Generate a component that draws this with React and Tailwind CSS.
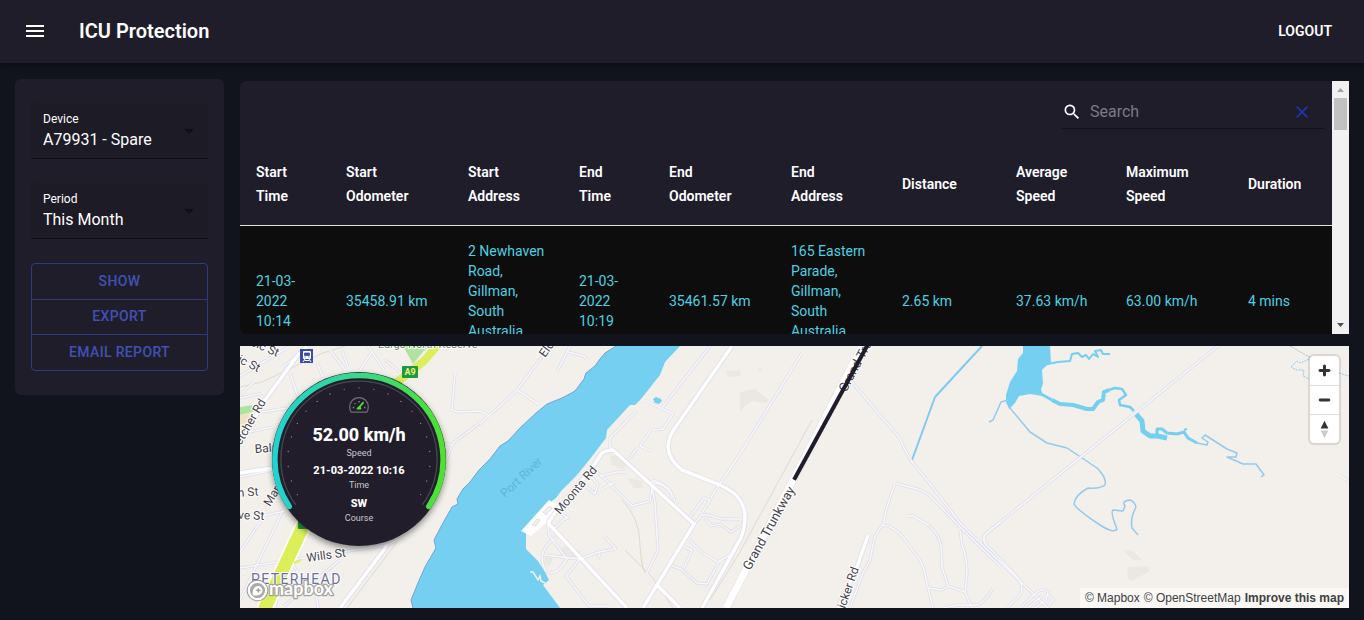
import React from 'react';
import { MdArrowDropDown, MdClear, MdMenu, MdSearch } from 'react-icons/md';

const columns = [
  { lines: ['Start', 'Time'], width: 'w-[90px]' },
  { lines: ['Start', 'Odometer'], width: 'w-[122px]' },
  { lines: ['Start', 'Address'], width: 'w-[111px]' },
  { lines: ['End', 'Time'], width: 'w-[90px]' },
  { lines: ['End', 'Odometer'], width: 'w-[122px]' },
  { lines: ['End', 'Address'], width: 'w-[111px]' },
  { lines: ['Distance'], width: 'w-[114px]' },
  { lines: ['Average', 'Speed'], width: 'w-[110px]' },
  { lines: ['Maximum', 'Speed'], width: 'w-[122px]' },
  { lines: ['Duration'], width: 'w-[100px]' },
];

const trips = [
  [
    ['21-03-', '2022', '10:14'],
    ['35458.91 km'],
    ['2 Newhaven', 'Road,', 'Gillman,', 'South', 'Australia'],
    ['21-03-', '2022', '10:19'],
    ['35461.57 km'],
    ['165 Eastern', 'Parade,', 'Gillman,', 'South', 'Australia'],
    ['2.65 km'],
    ['37.63 km/h'],
    ['63.00 km/h'],
    ['4 mins'],
  ],
];

function Lines({ items }) {
  return items.map((line) => (
    <span key={line} className="block whitespace-nowrap">
      {line}
    </span>
  ));
}

function Header() {
  return (
    <header className="relative z-10 flex h-[63px] items-center bg-[#201d2b] pr-6 pb-0.5 pl-[15px] shadow-[0_2px_5px_rgba(0,0,0,0.45)]">
      <button type="button" aria-label="Open menu" className="p-2 text-white">
        <MdMenu size={24} />
      </button>
      <h1 className="ml-6 text-xl font-semibold">ICU Protection</h1>
      <button type="button" className="ml-auto px-2 text-sm font-semibold">
        LOGOUT
      </button>
    </header>
  );
}

function SelectField({ id, label, value }) {
  return (
    <div className="relative rounded-t border-b border-[#0f0f15] bg-[#1d1b26] px-3 pt-2 pb-[5px]">
      <label htmlFor={id} className="block text-xs leading-4">
        {label}
      </label>
      <select
        id={id}
        defaultValue={value}
        className="block h-[26px] w-full appearance-none bg-transparent text-base text-white outline-none"
      >
        <option>{value}</option>
      </select>
      <MdArrowDropDown
        size={24}
        className="pointer-events-none absolute inset-y-0 right-[7px] my-auto text-[#100f16]"
      />
    </div>
  );
}

function Sidebar() {
  return (
    <aside className="flex w-[209px] shrink-0 flex-col gap-6 self-start rounded-md bg-[#201d2b] px-4 py-6">
      <SelectField id="device" label="Device" value="A79931 - Spare" />
      <SelectField id="period" label="Period" value="This Month" />
      <div className="flex flex-col divide-y divide-[#2f3a80] rounded border border-[#2f3a80] text-sm font-medium tracking-wide text-[#3f51b5]">
        <button type="button" className="h-9 pb-0.5">
          SHOW
        </button>
        <button type="button" className="h-[35px] pb-0.5">
          EXPORT
        </button>
        <button type="button" className="h-[35px] pb-0.5">
          EMAIL REPORT
        </button>
      </div>
    </aside>
  );
}

function ScrollTrack() {
  return (
    <div aria-hidden="true" className="flex w-[17px] shrink-0 flex-col items-center bg-[#f1f1f1]">
      <svg width="17" height="17" viewBox="0 0 17 17">
        <path d="M5 11h7L8.500 7z" fill="#a3a3a3" />
      </svg>
      <div className="h-8 w-[13px] bg-[#c1c1c1]" />
      <svg width="17" height="17" viewBox="0 0 17 17" className="mt-auto">
        <path d="M5 6h7L8.500 10z" fill="#505050" />
      </svg>
    </div>
  );
}

function TripTable() {
  return (
    <section className="flex h-[253px] overflow-hidden rounded-l-md bg-[#201d2b]">
      <div className="min-w-0 flex-1 overflow-hidden">
        <div className="flex h-[63px] items-center justify-end pr-2">
          <div className="flex h-8 w-[262px] items-center border-b border-[#12111a]">
            <MdSearch size={20} className="text-white" />
            <input
              type="text"
              aria-label="Search"
              placeholder="Search"
              className="ml-2 min-w-0 flex-1 bg-transparent text-base text-white outline-none placeholder:text-[#7c7a83]"
            />
            <button type="button" aria-label="Clear search" className="mr-3 text-[#2433b4]">
              <MdClear size={20} />
            </button>
          </div>
        </div>
        <table className="w-full table-fixed border-collapse text-sm">
          <thead>
            <tr className="border-b border-[#e0e0e0]">
              {columns.map((column) => (
                <th
                  key={column.lines.join(' ')}
                  scope="col"
                  className={`${column.width} px-4 pt-4 pb-[17px] text-left align-middle leading-6 font-semibold text-white`}
                >
                  <Lines items={column.lines} />
                </th>
              ))}
            </tr>
          </thead>
          <tbody>
            {trips.map((trip, row) => (
              <tr key={row} className="h-[151px] bg-[#0d0d0d]">
                {trip.map((cell, i) => (
                  <td
                    key={i}
                    className={
                      cell.length > 3
                        ? 'px-4 pt-[15px] align-top leading-5 text-[#4dd0e1]'
                        : 'p-4 align-middle leading-5 text-[#4dd0e1]'
                    }
                  >
                    <Lines items={cell} />
                  </td>
                ))}
              </tr>
            ))}
          </tbody>
        </table>
      </div>
      <ScrollTrack />
    </section>
  );
}

const mainRoads = [
  'M548 523L627 608',
  'M548 523L557 510L592 468L602 453Q606 450 613 450L694 524L643 608',
  'M657 585L680 608',
  'M732 346L677 425Q668 436 668 448Q669 460 682 470L720 485Q736 492 741 502Q749 515 741 538L702 608',
  'M868 535L857 567L838 608',
  'M307 346L298 355L265 400L242 440',
  'M387 545L383 551L340 608',
  'M240 473L273 468',
];

const minorRoads = [
  'M710 346L662 408',
  'M694 524L702 515L708 515L722 519L740 519',
  'M644 400L673 414L663 429L654 430M652 428L640 446L651 451M637 448L629 459',
  'M636 411L610 438L610 447L613 450',
  'M592 468L604 478L632 506L650 501L652 488L655 484M600 476L617 472L627 472M652 488L655 502L658 550L647 573',
  'M647 482Q668 482 675 501M652 480Q672 486 672 497',
  'M548 525L549 535L567 559Q556 578 546 571Q537 556 549 543L557 537M544 555L580 559L599 552L616 549L604 536M600 553L598 559',
  'M580 559L566 576L589 606L609 606',
  'M555 528L563 520L568 518L560 513',
  'M590 476L598 484L595 494L587 487M602 489L615 482',
  'M690 517L704 498L710 500L702 513M711 497L740 454L802 353',
  'M705 518L711 526L720 524L731 532L740 526M689 540L704 554L718 562L730 555L740 538M685 547L692 550L684 568M672 566L681 569L697 583L707 584L720 560',
  'M852 382L873 407L893 430Q901 438 903 446L912 462L927 480L960 523L1000 562L1048 608',
  'M895 483L917 489Q928 492 935 501L960 527L1000 566',
  'M895 483L886 510L883 525Q874 534 873 545L870 560L863 573L850 608',
  'M883 525Q893 526 903 537L913 551Q924 563 925 575L933 608',
  'M907 516L913 516L928 525Q940 535 941 546L942 567L948 586L965 592L971 606M928 588L942 590L948 586',
  'M960 530L962 545Q967 557 967 573L965 592M943 608L957 605L978 605Q985 602 993 588',
  'M985 544L984 536Q990 530 1000 522',
  'M1218 346L987 533Q981 538 985 543L1017 577Q1025 587 1020 595L1007 608',
  'M1020 608L1036 593Q1043 587 1048 592L1046 600L1035 608M1028 608L1042 596M1048 595L1053 600L1048 606',
  'M1339 475L1349 481',
  'M240 376L290 346M240 395L254 382M290 373L298 397M317 362L323 378M342 350L348 367M368 346L384 370',
  'M240 398L263 393M263 412L287 408M240 434L273 427M283 367L310 346M395 380L420 361M400 372L385 360',
  'M240 552L262 519L267 514M240 600L283 510M240 477L274 470M240 568L387 545L403 537M262 516L285 511',
  'M284 606L340 560M275 608L284 562M318 608L316 594M290 560L300 576',
  'M455 373L452 410L458 412L480 411L490 416M445 463L453 443L480 423M445 444L453 445',
  'M480 424L517 390L550 346M517 390L540 405M570 346L557 372M568 352L584 356L587 360',
  'M360 370L372 352M330 350L345 370',
];

const rails = [
  'M812 420L740 552L710 600M240 387L262 382L323 353L345 346',
  'M622 500Q640 518 640 545Q641 565 645 573M625 550L652 577L673 608',
  'M397 542L347 608',
];

const streams = [
  'M1008 400L1001 402L993 420L989 422',
  'M1010 408L1030 432L1047 443L1067 448L1097 468Q1107 478 1105 485Q1100 489 1088 488Q1075 495 1074 504Q1077 510 1100 525Q1114 534 1117 529Q1110 512 1113 510L1123 511L1125 506Q1121 501 1130 500Q1135 502 1136 507Q1130 518 1132 528L1138 535',
  'M1197 443L1207 445L1208 442L1202 438L1205 435L1227 449L1237 453L1236 457L1227 457L1243 464L1256 464L1264 475L1261 477',
];

const labels = [
  { text: 'Moonta Rd', x: 560, y: 515, angle: -50, size: 12 },
  { text: 'Grand Trunkway', x: 750, y: 571, angle: -61, size: 13 },
  { text: 'Grand Trunkway', x: 846, y: 393, angle: -62, size: 13 },
  { text: 'icker Rd', x: 845, y: 609, angle: -71, size: 12 },
  { text: 'Elder Rd', x: 545, y: 358, angle: -54, size: 12 },
  { text: 'Wills St', x: 307, y: 562, angle: -8, size: 12 },
  { text: 'Fletcher Rd', x: 236, y: 454, angle: -60, size: 12 },
  { text: 'Balmoral', x: 255, y: 453, angle: -4, size: 12 },
  { text: 'Marmora', x: 270, y: 507, angle: -59, size: 12 },
  { text: 'n St', x: 238, y: 497, angle: -4, size: 12 },
  { text: 've St', x: 238, y: 519, angle: 2, size: 12 },
  { text: 'ic St', x: 237, y: 362, angle: 26, size: 12 },
  { text: 'sic St', x: 250, y: 345, angle: 24, size: 12 },
];

function MapDrawing() {
  return (
    <svg
      viewBox="240 346 1109 262"
      preserveAspectRatio="xMinYMin slice"
      className="block h-full w-full"
      role="img"
      aria-label="Trip map"
    >
      <rect x="240" y="346" width="1400" height="900" fill="#f3f0eb" />

      <g fill="#ebe8e1">
        <path d="M1123 550L1133 551L1142 560L1133 560Z" />
        <path d="M1128 567L1147 566L1150 571L1132 581L1127 577Z" />
        <path d="M610 455L628 459L624 470L612 465Z" />
        <path d="M627 478L643 481L643 488L634 488Z" />
        <path d="M563 546L581 551L578 559L560 553Z" />
        <path d="M726 371L740 370L741 376L728 377Z" />
        <path d="M740 392L755 389L769 400L766 403L753 401L744 407L740 411Z" />
        <path d="M759 367L763 370L758 371Z" />
        <path d="M546 554L553 558L549 567L544 563Z" />
      </g>

      <path d="M403 346L428 346L413 364Z" fill="#b0e3a3" />
      <path d="M240 407L252 405L253 412L240 415Z" fill="#b0e3a3" />
      <path d="M240 415L251 413L248 423L240 425Z" fill="#f0e3c4" />

      <path
        d="M616 346L605 353L600 359L595 366L586 373L584 379L575 391L562 398L547 404L536 413L520 428L508 441L500 446L490 459L479 470L470 482L463 489L457 499L458 504L452 507L443 523L434 540L436 548L425 567L418 583L411 600L413 608L560 608L543 585L549 580L545 572L538 561L526 549L526 533L552 501L556 498L562 490L577 475L590 459L606 438L607 430L630 405L635 405L641 399L645 394L656 380L660 375L665 362L680 346Z"
        fill="#75cff0"
      />
      <path
        d="M616 346L605 353L600 359L595 366L586 373L584 379L575 391L562 398L547 404L536 413L520 428L508 441L500 446L490 459L479 470L470 482L463 489L457 499L458 504L452 507L443 523L434 540L436 548L425 567L418 583L411 600L413 608"
        fill="none"
        stroke="#6fa3d8"
        strokeWidth="1"
      />
      <path d="M653 399L656 397L661 399L662 401L659 404L655 403Z" fill="#75cff0" />
      <path d="M549 500L560 507L547 522L531 536L521 531Z" fill="#ffffff" />
      <path
        d="M543 512L549 506L552 508L546 515ZM532 525L537 519L540 520L536 526Z"
        fill="#f3f0eb"
        stroke="#dedfeb"
      />
      <path
        d="M530 572L533 572L538 580L540 576L541 581L545 583"
        fill="none"
        stroke="#f3f0eb"
        strokeWidth="1.500"
      />

      <path
        d="M1023 346L1050 346L1051 363L1046 366L1042 370L1043 384L1041 389L1043 396L1030 394L1019 396L1015 403L1009 409L1006 402L1006 395L1010 382L1017 371L1018 359L1023 353Z"
        fill="#75cff0"
      />
      <g fill="none" stroke="#75cff0" strokeLinejoin="round">
        <path d="M1048 364L1058 362L1070 361L1072 354L1078 353L1082 357L1086 355L1089 359L1093 354L1098 357L1095 351L1101 350L1103 354L1110 354" strokeWidth="2" />
        <path d="M1041 394L1052 400" strokeWidth="3" />
        <path d="M1052 400L1060 404L1073 405L1087 409L1093 409L1098 402L1103 400L1104 392L1109 390" strokeWidth="4" />
        <path d="M1109 390L1115 388L1122 389L1126 395L1119 400L1120 405L1130 407L1134 411" strokeWidth="2.500" />
        <path d="M1136 414L1142 421L1143 431L1150 436L1157 436L1167 438" strokeWidth="5" />
        <path d="M1157 437L1157 429L1162 429L1167 433L1177 434L1184 432L1188 438L1197 443" strokeWidth="3" />
        <path d="M1184 430L1187 429" strokeWidth="2" />
      </g>

      <g fill="none" stroke="#93c9ee" strokeWidth="1.500" strokeLinejoin="round">
        {streams.map((d) => (
          <path key={d} d={d} />
        ))}
        <path d="M982 346L935 397L912 460" stroke="#7fc9f3" strokeWidth="2" />
        <path
          d="M1290 346L1311 358M1339 373L1349 376M1309 359L1301 363L1297 361L1291 367L1297 370L1304 370L1303 376L1309 379"
          strokeWidth="1"
          strokeDasharray="2 1"
        />
      </g>

      <g fill="none" stroke="#dddad4" strokeWidth="1">
        {rails.map((d) => (
          <path key={d} d={d} />
        ))}
      </g>

      <g fill="none" strokeLinejoin="round">
        <g stroke="#dcdde9" strokeWidth="3">
          {minorRoads.map((d) => (
            <path key={d} d={d} />
          ))}
        </g>
        <g stroke="#dcdde9" strokeWidth="5">
          {mainRoads.map((d) => (
            <path key={d} d={d} />
          ))}
        </g>
        <g stroke="#f8f8fb" strokeWidth="1.500">
          {minorRoads.map((d) => (
            <path key={d} d={d} />
          ))}
        </g>
        <g stroke="#ffffff" strokeWidth="3.500">
          {mainRoads.map((d) => (
            <path key={d} d={d} />
          ))}
        </g>
        <path d="M862 346L792 482L740 581L726 608" stroke="#dcdde9" strokeWidth="8" />
        <path d="M862 346L792 482L740 581L726 608" stroke="#ffffff" strokeWidth="7" />
        <path d="M437 346L424 361L395 384" stroke="#dcee5a" strokeWidth="8" />
        <path d="M304 524L264 610" stroke="#ffffff" strokeWidth="16" />
        <path d="M304 524L264 610" stroke="#dcee5a" strokeWidth="13" />
        <path d="M294 563L301 560" stroke="#dcee5a" strokeWidth="2" />
      </g>

      <g
        fontFamily="Roboto, 'Liberation Sans', sans-serif"
        fill="#45444a"
        stroke="#ffffff"
        strokeWidth="2"
        paintOrder="stroke"
        strokeLinejoin="round"
      >
        {labels.map((label) => (
          <text
            key={`${label.text}-${label.x}`}
            fontSize={label.size}
            transform={`translate(${label.x} ${label.y}) rotate(${label.angle})`}
          >
            {label.text}
          </text>
        ))}
        <text x="378" y="348" fontSize="11" fill="#6d8a68">
          Largs North Reserve
        </text>
        <text
          transform="translate(505 498) rotate(-43)"
          fontSize="12"
          fill="#60b4d6"
          stroke="none"
        >
          Port River
        </text>
        <text x="251" y="584" fontSize="14" fill="#6c6f99" className="tracking-widest">
          PETERHEAD
        </text>
      </g>

      <path d="M867 346L795 478" stroke="#1f1c2b" strokeWidth="4" strokeLinecap="square" />

      <rect x="300" y="349" width="13" height="14" fill="#3c4ba5" />
      <rect x="303" y="351" width="8" height="8" rx="1" fill="#ffffff" />
      <path d="M304.500 353h5v2.500h-5zM304.500 357h1.200M308.300 357h1.200" fill="#3c4ba5" stroke="#3c4ba5" strokeWidth="0.800" />
      <path d="M305 359L303 362M309 359L311 362M304.500 360.500H309.500" stroke="#ffffff" strokeWidth="1" />

      <rect x="402" y="366" width="16" height="12" rx="1" fill="#1b9a45" />
      <text x="410" y="375" textAnchor="middle" fontSize="9" fontWeight="700" fontFamily="Roboto, sans-serif" fill="#f4f06a">
        A9
      </text>
      <rect x="298" y="517" width="16" height="12" rx="1" fill="#1b9a45" />
    </svg>
  );
}

const ticks = Array.from({ length: 21 }, (_, i) => {
  const angle = ((150 + (i * 240) / 20) * Math.PI) / 180;
  return { x: 88 + 72 * Math.cos(angle), y: 88 + 72 * Math.sin(angle) };
});

function Gauge() {
  return (
    <div className="absolute top-[26px] left-8 h-[174px] w-[174px] rounded-full bg-[#211d2a] shadow-[0_3px_6px_rgba(0,0,0,0.45)]">
      <svg viewBox="0 0 176 176" className="absolute inset-0 h-full w-full" aria-hidden="true">
        <defs>
          <linearGradient id="gauge-ring" x1="0" x2="1" y1="0" y2="0">
            <stop offset="0" stopColor="#1fd3d0" />
            <stop offset="0.500" stopColor="#36d98a" />
            <stop offset="1" stopColor="#4ce22f" />
          </linearGradient>
        </defs>
        <path
          d="M17.500 136A85 85 0 1 1 158.500 136"
          fill="none"
          stroke="url(#gauge-ring)"
          strokeWidth="5.500"
          strokeLinecap="round"
        />
        <path d="M24 134.500A79 79 0 1 1 152 134.500" fill="none" stroke="#4a4753" strokeWidth="1.300" />
        {ticks.map((tick) => (
          <circle key={`${tick.x}-${tick.y}`} cx={tick.x} cy={tick.y} r="0.700" fill="#8a8792" />
        ))}
      </svg>
      <div className="relative flex flex-col items-center pt-[25px] text-center text-white">
        <svg width="20" height="16" viewBox="0 0 20 16" fill="none" aria-hidden="true">
          <path
            d="M2.200 15.200Q.7 13 .7 9.800A9.300 9.200 0 0 1 19.300 9.800Q19.300 13 17.800 15.200Z"
            stroke="#6d6a76"
            strokeWidth="1.300"
            strokeLinejoin="round"
          />
          <path
            d="M3.800 10.500h1.400M15 10.500h1.400M5.500 6.300l.9.800M10 4v1.400"
            stroke="#8a8792"
            strokeWidth="1.300"
          />
          <path d="M14 5.800L10 10.500" stroke="#4ce22f" strokeWidth="1.800" strokeLinecap="round" />
          <path d="M7.500 12.500Q8 9.500 10.500 9.500Q13 10.500 12 12.500Z" fill="#4ce22f" />
        </svg>
        <strong className="mt-2.5 text-lg leading-6 font-extrabold">52.00 km/h</strong>
        <span className="text-[9px] leading-3 text-[#c9c7ce]">Speed</span>
        <strong className="mt-1 text-[11px] leading-4 font-extrabold">21-03-2022 10:16</strong>
        <span className="text-[9px] leading-3 text-[#c9c7ce]">Time</span>
        <strong className="mt-[5px] text-[11px] leading-4 font-extrabold">SW</strong>
        <span className="text-[9px] leading-3 text-[#c9c7ce]">Course</span>
      </div>
    </div>
  );
}

function MapControls() {
  return (
    <div className="absolute top-2.5 right-2.5 flex w-[29px] flex-col rounded bg-white shadow-[0_0_0_2px_rgba(0,0,0,0.1)]">
      <button type="button" aria-label="Zoom in" className="h-[29px]">
        <svg width="29" height="29" viewBox="0 0 29 29" fill="#333333">
          <path d="M14.500 8.500c-.75 0-1.500.75-1.500 1.500v3h-3c-.75 0-1.500.75-1.500 1.500S9.250 16 10 16h3v3c0 .75.750 1.500 1.500 1.500S16 19.750 16 19v-3h3c.75 0 1.500-.75 1.500-1.500S19.750 13 19 13h-3v-3c0-.75-.75-1.500-1.500-1.500z" />
        </svg>
      </button>
      <button
        type="button"
        aria-label="Zoom out"
        className="h-[29px] border-t border-[#dddddd]"
      >
        <svg width="29" height="28" viewBox="0 0 29 29" fill="#333333">
          <path d="M10 13c-.75 0-1.500.75-1.500 1.500S9.250 16 10 16h9c.75 0 1.500-.75 1.500-1.500S19.750 13 19 13h-9z" />
        </svg>
      </button>
      <button
        type="button"
        aria-label="Reset bearing to north"
        className="h-[29px] border-t border-[#dddddd]"
      >
        <svg width="29" height="28" viewBox="0 0 29 29">
          <path d="M10.500 14l4-8 4 8z" fill="#333333" />
          <path d="M10.500 16l4 8 4-8z" fill="#cccccc" />
        </svg>
      </button>
    </div>
  );
}

function MapboxLogo() {
  return (
    <a href="#mapbox" aria-label="Mapbox logo" className="absolute bottom-[5px] left-1.5">
      <svg width="92" height="25" viewBox="0 0 92 25">
        <circle cx="11.500" cy="12.500" r="9.500" fill="#a9a8a6" stroke="#9a9996" strokeWidth="2.500" />
        <circle cx="11.500" cy="12.500" r="8.700" fill="none" stroke="#ffffff" strokeWidth="2.300" />
        <path d="M6.800 17.200C6 12.500 8 8 12.200 8a4.400 4.400 0 0 1 4.400 4.400C16.600 16.600 12 18 6.800 17.200z" fill="#ffffff" />
        <path d="M12.300 9.400l.9 2 2 .9-2 .9-.9 2-.9-2-2-.9 2-.9z" fill="#a09f9d" />
        <text
          x="23"
          y="17"
          fontFamily="Lato, sans-serif"
          fontSize="18"
          fontWeight="700"
          fill="#ffffff"
          stroke="#a3a2a0"
          strokeWidth="2.500"
          paintOrder="stroke"
          strokeLinejoin="round"
        >
          mapbox
        </text>
      </svg>
    </a>
  );
}

function TripMap() {
  return (
    <section className="relative h-[262px] overflow-hidden">
      <MapDrawing />
      <Gauge />
      <MapControls />
      <MapboxLogo />
      <div className="absolute right-0 bottom-0 flex gap-1 bg-white/50 px-[5px] font-['Liberation_Sans',Arial,sans-serif] text-xs leading-5 text-[#404040]">
        <a href="#about-mapbox">© Mapbox</a>
        <a href="#about-osm">© OpenStreetMap</a>
        <a href="#improve" className="font-bold">
          Improve this map
        </a>
      </div>
    </section>
  );
}

export default function App() {
  return (
    <div className="min-h-screen bg-[#11141c] font-[Roboto,'Liberation_Sans',sans-serif] text-white">
      <Header />
      <main className="flex gap-4 px-[15px] pt-4 pb-3">
        <Sidebar />
        <div className="flex min-w-0 flex-1 flex-col gap-3 pt-0.5">
          <TripTable />
          <TripMap />
        </div>
      </main>
    </div>
  );
}
